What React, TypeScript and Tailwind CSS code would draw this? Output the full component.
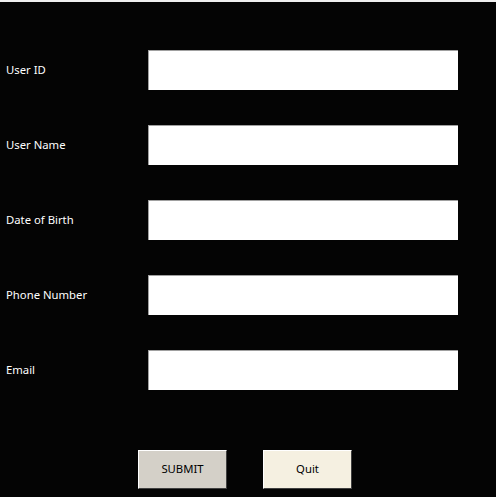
import React from 'react';

const fields = ['User ID', 'User Name', 'Date of Birth', 'Phone Number', 'Email'];

const App = () => {
  return (
    <div className="w-[496px] h-[497px] bg-[#040404] border-t-2 border-[#f0f0f0] font-['Noto_Sans',sans-serif] text-[11.3px] overflow-hidden">
      {/* form rows */}
      <div className="flex flex-col gap-[35px] pt-[48px] pl-[6px]">
        {fields.map((label) => (
          <div key={label} className="flex items-center h-[40px]">
            <label className="w-[142px] text-white pt-px">{label}</label>
            <input
              type="text"
              className="w-[310px] h-[40px] bg-white border-t border-l border-[#a0a0a0] outline-none px-1"
            />
          </div>
        ))}
      </div>

      {/* buttons */}
      <div className="flex pt-[60px] pl-[138px] gap-[36px]">
        <button className="w-[89px] h-[39px] bg-[#d4d0c8] text-black border border-t-[#ffffff] border-l-[#ffffff] border-r-[#404040] border-b-[#404040]">
          SUBMIT
        </button>
        <button className="w-[89px] h-[39px] bg-[#f5f0e1] text-black border border-t-[#ffffff] border-l-[#ffffff] border-r-[#404040] border-b-[#404040]">
          Quit
        </button>
      </div>
    </div>
  );
};

export default App;
